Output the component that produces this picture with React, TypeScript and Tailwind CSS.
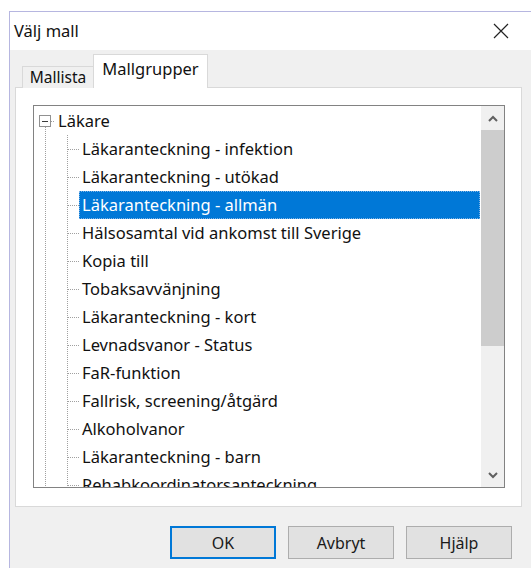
import React from "react";

const FONT = { fontFamily: '"Noto Sans", "Open Sans", sans-serif' };

const items = [
  "Läkaranteckning - infektion",
  "Läkaranteckning - utökad",
  "Läkaranteckning - allmän",
  "Hälsosamtal vid ankomst till Sverige",
  "Kopia till",
  "Tobaksavvänjning",
  "Läkaranteckning - kort",
  "Levnadsvanor - Status",
  "FaR-funktion",
  "Fallrisk, screening/åtgärd",
  "Alkoholvanor",
  "Läkaranteckning - barn",
  "Rehabkoordinatorsanteckning",
];

const SELECTED = 2;

function RootGuide() {
  return (
    <svg width="21" height="28" className="shrink-0" shapeRendering="crispEdges">
      <rect x="5.5" y="8.5" width="11" height="11" fill="#fff" stroke="#919191" />
      <line x1="8" y1="14" x2="14" y2="14" stroke="#3c3c3c" />
      <line x1="11.5" y1="20" x2="11.5" y2="28" stroke="#a0a0a0" strokeDasharray="1 1" />
      <line x1="17" y1="14.5" x2="21" y2="14.5" stroke="#a0a0a0" strokeDasharray="1 1" />
    </svg>
  );
}

function ChildGuide() {
  return (
    <svg width="45" height="28" className="shrink-0" shapeRendering="crispEdges">
      <line x1="11.5" y1="0" x2="11.5" y2="28" stroke="#a0a0a0" strokeDasharray="1 1" />
      <line x1="33.5" y1="0" x2="33.5" y2="28" stroke="#a0a0a0" strokeDasharray="1 1" />
      <line x1="34" y1="14.5" x2="45" y2="14.5" stroke="#a0a0a0" strokeDasharray="1 1" />
    </svg>
  );
}

function Chevron({ up }: { up?: boolean }) {
  return (
    <svg width="10" height="7" viewBox="0 0 10 7">
      <polyline
        points={up ? "1,6 5,2 9,6" : "1,1 5,5 9,1"}
        fill="none"
        stroke="#606060"
        strokeWidth="2"
      />
    </svg>
  );
}

function Button({ label, primary }: { label: string; primary?: boolean }) {
  return (
    <div
      className={
        "flex h-[33px] w-[106px] items-center justify-center bg-[#e1e1e1] text-[16px] text-[#1a1a1a] " +
        (primary ? "border-2 border-[#0078d7]" : "border border-[#adadad]")
      }
    >
      {label}
    </div>
  );
}

export default function App() {
  return (
    <div className="h-[568px] w-[531px] overflow-hidden bg-white" style={FONT}>
      <div className="ml-[9px] mt-[11px] h-[557px] w-[522px] border-l border-t border-[#b6b6e0] bg-[#f0f0f0]">
        {/* title bar */}
        <div className="flex h-[38px] items-center justify-between bg-white pl-[4px] pr-[22px]">
          <span className="text-[16.5px] text-[#111]">Välj mall</span>
          <svg width="16" height="16" viewBox="0 0 16 16">
            <path d="M1 1L15 15M15 1L1 15" stroke="#222" strokeWidth="1.2" />
          </svg>
        </div>

        {/* tabs */}
        <div className="relative z-10 ml-[12px] mt-[4px] flex h-[34px] items-end">
          <div className="flex h-[22px] w-[71px] items-center justify-center border border-b-0 border-r-0 border-[#d9d9d9] bg-[#f0f0f0] text-[15.5px] text-[#111]">
            Mallista
          </div>
          <div className="flex h-[34px] w-[115px] items-start justify-center border border-b-0 border-[#d9d9d9] bg-white pt-[2px] text-[16.5px] text-[#111]">
            Mallgrupper
          </div>
        </div>

        {/* tab page */}
        <div className="-mt-px ml-[5px] h-[420px] w-[507px] border border-[#d9d9d9] bg-white pl-[17px] pt-[17px]">
          <div className="flex h-[383px] w-[472px] border border-[#828282] bg-white">
            <div className="flex-1 overflow-hidden pt-px text-[16.5px] leading-none text-[#111]">
              <div className="flex h-[28px] items-center">
                <RootGuide />
                <span className="px-[3px]">Läkare</span>
              </div>
              {items.map((t, i) => (
                <div key={t} className="flex h-[28px] items-center">
                  <ChildGuide />
                  <span
                    className={
                      "flex h-full flex-1 items-center whitespace-nowrap px-[3px] " +
                      (i === SELECTED
                        ? "mr-[1px] border border-dotted border-[#7fb4e6] bg-[#0078d7] pl-[2px] text-white"
                        : "")
                    }
                  >
                    {t}
                  </span>
                </div>
              ))}
            </div>

            {/* vertical scrollbar */}
            <div className="flex w-[23px] flex-col bg-[#f0f0f0]">
              <div className="flex h-[24px] items-center justify-center">
                <Chevron up />
              </div>
              <div className="h-[216px] bg-[#cdcdcd]" />
              <div className="flex-1" />
              <div className="flex h-[24px] items-center justify-center">
                <Chevron />
              </div>
            </div>
          </div>
        </div>

        {/* dialog buttons */}
        <div className="mt-[19px] flex justify-end gap-[12px] pr-[19px]">
          <Button label="OK" primary />
          <Button label="Avbryt" />
          <Button label="Hjälp" />
        </div>
      </div>
    </div>
  );
}
